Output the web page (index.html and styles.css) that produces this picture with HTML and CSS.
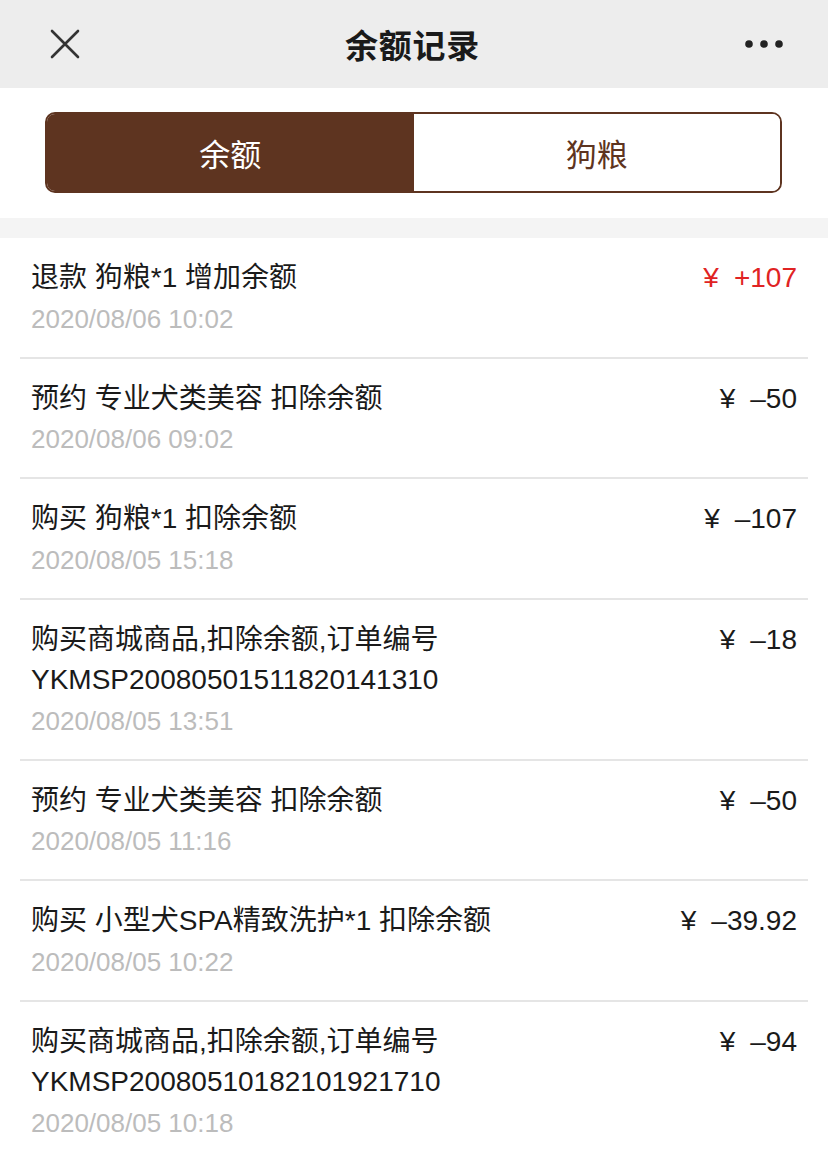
FILE: index.html
```html
<!DOCTYPE html>
<html lang="zh-CN">
<head>
<meta charset="utf-8">
<title>余额记录</title>
<link rel="stylesheet" href="styles.css">
</head>
<body>
<div class="page">
  <header class="navbar">
    <span class="nav-btn close">
      <svg width="32" height="32" viewBox="0 0 32 32"><path d="M3 3 L29 29 M29 3 L3 29" stroke="#333" stroke-width="2.6" stroke-linecap="round" fill="none"/></svg>
    </span>
    <h1 class="nav-title">余额记录</h1>
    <span class="nav-btn more">
      <svg width="40" height="10" viewBox="0 0 40 10"><circle cx="5" cy="5" r="3.8" fill="#222"/><circle cx="20" cy="5" r="3.8" fill="#222"/><circle cx="35" cy="5" r="3.8" fill="#222"/></svg>
    </span>
  </header>
  <section class="tabs-wrap">
    <div class="tabs">
      <div class="tab active">余额</div>
      <div class="tab">狗粮</div>
    </div>
  </section>
  <div class="gap"></div>
  <ul class="list">
    <li class="row">
      <div class="info"><div class="title">退款 狗粮*1 增加余额</div><div class="date">2020/08/06 10:02</div></div>
      <div class="amount plus"><span class="yen">¥</span>+107</div>
    </li>
    <li class="row">
      <div class="info"><div class="title">预约 专业犬类美容 扣除余额</div><div class="date">2020/08/06 09:02</div></div>
      <div class="amount"><span class="yen">¥</span>–50</div>
    </li>
    <li class="row">
      <div class="info"><div class="title">购买 狗粮*1 扣除余额</div><div class="date">2020/08/05 15:18</div></div>
      <div class="amount"><span class="yen">¥</span>–107</div>
    </li>
    <li class="row">
      <div class="info"><div class="title">购买商城商品,扣除余额,订单编号<br>YKMSP20080501511820141310</div><div class="date">2020/08/05 13:51</div></div>
      <div class="amount"><span class="yen">¥</span>–18</div>
    </li>
    <li class="row">
      <div class="info"><div class="title">预约 专业犬类美容 扣除余额</div><div class="date">2020/08/05 11:16</div></div>
      <div class="amount"><span class="yen">¥</span>–50</div>
    </li>
    <li class="row">
      <div class="info"><div class="title">购买 小型犬SPA精致洗护*1 扣除余额</div><div class="date">2020/08/05 10:22</div></div>
      <div class="amount"><span class="yen">¥</span>–39.92</div>
    </li>
    <li class="row">
      <div class="info"><div class="title">购买商城商品,扣除余额,订单编号<br>YKMSP20080510182101921710</div><div class="date">2020/08/05 10:18</div></div>
      <div class="amount"><span class="yen">¥</span>–94</div>
    </li>
  </ul>
</div>
</body>
</html>
```
FILE: styles.css
```css
* { box-sizing: border-box; }
html, body { margin: 0; padding: 0; background: #fff; }
body {
  font-family: "Liberation Sans", "Noto Sans CJK SC", sans-serif;
  color: #1a1a1a;
}
.page { width: 828px; }

.navbar {
  height: 88px;
  background: #ededed;
  display: flex;
  align-items: center;
  justify-content: space-between;
  padding: 0 44px 0 49px;
}
.nav-btn { display: flex; align-items: center; }
.nav-title {
  margin: 0;
  font-family: "Noto Sans CJK SC", sans-serif;
  font-size: 33px;
  font-weight: 700;
  color: #1a1a1a;
  letter-spacing: 0.8px;
}

.tabs-wrap {
  padding: 24px 46px 25px 45px;
}
.tabs {
  display: flex;
  height: 81px;
  border: 2px solid #5e3420;
  border-radius: 10px;
  overflow: hidden;
}
.tab {
  flex: 1;
  display: flex;
  align-items: center;
  justify-content: center;
  font-family: "Noto Sans CJK SC", sans-serif;
  font-size: 31px;
  color: #5e3420;
  background: #fff;
}
.tab.active { background: #5e3420; color: #fff; }

.gap { height: 20px; background: #f4f4f4; }

.list { list-style: none; margin: 0; padding: 0; }
.row {
  margin: 0 20px;
  padding: 20px 11px 18px;
  border-bottom: 2px solid #e5e5e5;
  display: flex;
  justify-content: space-between;
  align-items: flex-start;
}
.row:last-child { border-bottom: none; }
.title { font-size: 28px; line-height: 40.5px; color: #1a1a1a; }
.date { font-size: 26px; line-height: 40px; color: #bcbcbc; }
.amount { font-size: 28px; line-height: 40px; color: #1a1a1a; white-space: nowrap; }
.amount.plus { color: #e02323; }
.yen { margin-right: 15px; }
```
